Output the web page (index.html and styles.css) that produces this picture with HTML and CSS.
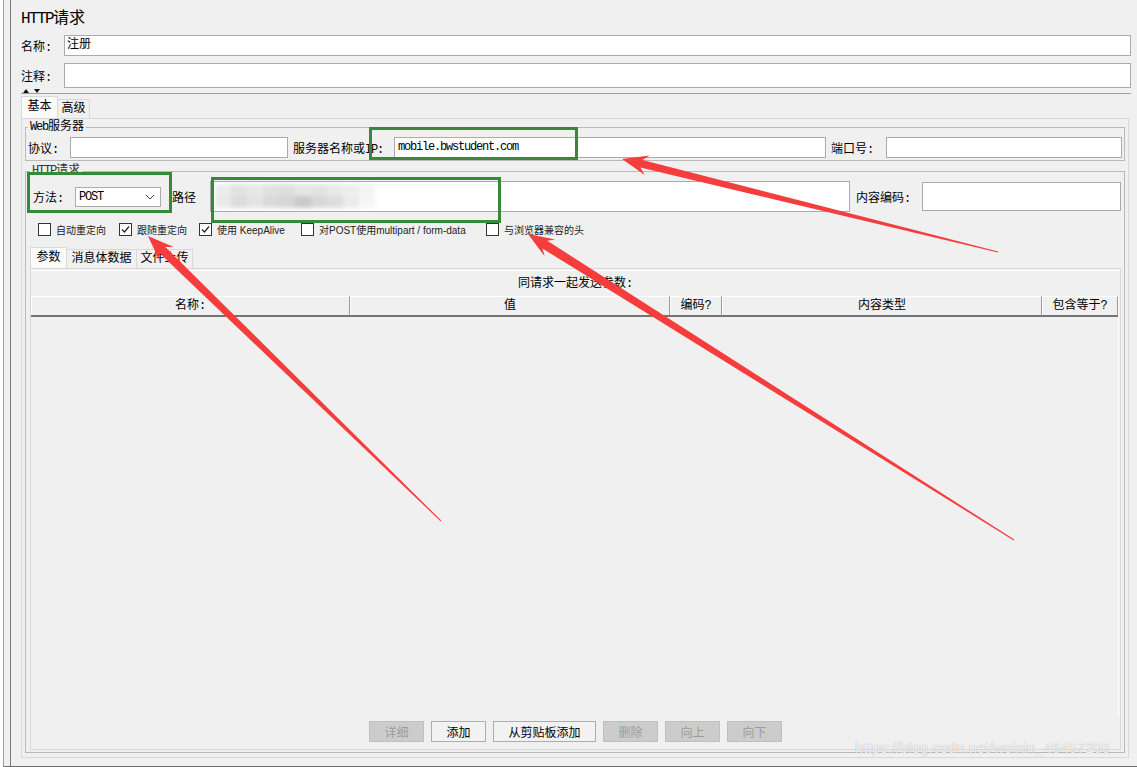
FILE: index.html
```html
<!DOCTYPE html>
<html lang="zh-CN">
<head>
<meta charset="UTF-8">
<meta name="viewport" content="width=device-width, initial-scale=1.0">
<title>HTTP请求</title>
<link rel="stylesheet" href="styles.css">
</head>
<body>
<div class="app">
<div class="main">
    <div class="title"><span class="lat big">HTTP</span>请求</div>
    <div class="row row-name">
        <span class="label">名称:</span>
        <div class="field">注册</div>
    </div>
    <div class="row row-note">
        <span class="label">注释:</span>
        <div class="field"></div>
    </div>
    <div class="splitter">
        <svg width="20" height="5" viewBox="0 0 20 5"><path d="M1 5 L4 1 L7 5 Z M12 1 L18 1 L15 5 Z" fill="#111"/></svg>
    </div>
    <div class="tabs">
        <span class="tab active t-basic">基本</span>
        <span class="tab t-adv">高级</span>
    </div>
    <div class="tab-panel">
        <fieldset class="group web">
            <legend><span class="lat">Web</span>服务器</legend>
            <div class="web-row">
                <span class="l-proto">协议:</span>
                <div class="field f-proto"></div>
                <span class="l-host">服务器名称或<span class="lat">IP</span>:</span>
                <div class="field f-host"><span class="lat">mobile.bwstudent.com</span></div>
                <span class="l-port">端口号:</span>
                <div class="field f-port"></div>
            </div>
        </fieldset>
        <fieldset class="group http">
            <legend><span class="lat">HTTP</span>请求</legend>
            <div class="req-row">
                <span class="l-method">方法:</span>
                <div class="select">
                    <span class="lat">POST</span>
                    <svg width="10" height="6" viewBox="0 0 10 6"><polyline points="1,1 5,5 9,1" fill="none" stroke="#444" stroke-width="1"/></svg>
                </div>
                <span class="l-path">路径</span>
                <div class="field f-path">
                    <div class="smudge">
                        <i style="background:#ececec"></i><i style="background:#e2e2e2"></i><i style="background:#e8e8e8"></i><i style="background:#e0e0e0"></i><i style="background:#dedede"></i><i style="background:#e6e6e6"></i><i style="background:#e3e3e3"></i><i style="background:#e9e9e9"></i><i style="background:#eeeeee"></i><i style="background:#f4f4f4"></i>
                        <i style="background:#e9e9e9"></i><i style="background:#dcdcdc"></i><i style="background:#e4e4e4"></i><i style="background:#dadada"></i><i style="background:#d6d6d6"></i><i style="background:#c9c9c9"></i><i style="background:#d8d8d8"></i><i style="background:#dddddd"></i><i style="background:#ebebeb"></i><i style="background:#f6f6f6"></i>
                    </div>
                </div>
                <span class="l-enc">内容编码:</span>
                <div class="field f-enc"></div>
            </div>
            <div class="checks">
                <label class="check c1"><span class="box"></span>自动重定向</label>
                <label class="check c2"><span class="box on"><svg width="11" height="11" viewBox="0 0 11 11"><polyline points="2,5.5 4.5,8 9,2.5" fill="none" stroke="#222" stroke-width="1.2"/></svg></span>跟随重定向</label>
                <label class="check c3"><span class="box on"><svg width="11" height="11" viewBox="0 0 11 11"><polyline points="2,5.5 4.5,8 9,2.5" fill="none" stroke="#222" stroke-width="1.2"/></svg></span>使用 KeepAlive</label>
                <label class="check c4"><span class="box"></span>对POST使用multipart / form-data</label>
                <label class="check c5"><span class="box"></span>与浏览器兼容的头</label>
            </div>
            <div class="subtabs">
                <span class="tab active s-args">参数</span>
                <span class="tab s-body">消息体数据</span>
                <span class="tab s-files">文件上传</span>
            </div>
            <div class="subpanel">
                <div class="caption">同请求一起发送参数:</div>
                <div class="table">
                    <div class="thead">
                        <span class="th c-name">名称:</span>
                        <span class="th c-value">值</span>
                        <span class="th c-enc">编码?</span>
                        <span class="th c-type">内容类型</span>
                        <span class="th c-eq">包含等于?</span>
                    </div>
                    <div class="tbody"></div>
                </div>
                <div class="buttons">
                    <button class="btn off">详细</button>
                    <button class="btn">添加</button>
                    <button class="btn wide">从剪贴板添加</button>
                    <button class="btn off">删除</button>
                    <button class="btn off">向上</button>
                    <button class="btn off">向下</button>
                </div>
            </div>
        </fieldset>
    </div>
</div>
</div>

<svg class="marks" width="1137" height="767" viewBox="0 0 1137 767">
    <rect x="370.5" y="128.5" width="206" height="30" fill="none" stroke="#348a38" stroke-width="3"/>
    <rect x="28.5" y="173.5" width="142" height="38" fill="none" stroke="#348a38" stroke-width="3"/>
    <rect x="212.5" y="178.5" width="287" height="43" fill="none" stroke="#348a38" stroke-width="3"/>
    <polygon points="622,159 649.6,155.5 642.4,160.0 998.1,251.5 997.9,252.5 640.4,167.6 644.8,175.0" fill="#f53d3d"/>
    <polygon points="148,236 173.6,247.0 165.3,246.9 441.3,520.6 440.7,521.4 159.4,253.0 159.7,261.3" fill="#f53d3d"/>
    <polygon points="528,234 555.3,239.4 547.3,240.8 1014.3,539.6 1013.7,540.4 542.5,248.5 544.7,256.3" fill="#f53d3d"/>
</svg>
<div class="watermark">https://blog.csdn.net/weixin_46457203</div>
</body>
</html>
```

FILE: styles.css
```css
/* JMeter style HTTP sampler panel */
html {
    background: #fff;
}
body {
    margin: 0;
    font-family: "Liberation Mono", "Noto Sans CJK SC", monospace;
    font-size: 12px;
    color: #000;
    position: relative;
}
.lat {
    font-family: "Liberation Mono", monospace;
    letter-spacing: -1.2px;
}
.lat.big {
    letter-spacing: -1.6px;
}
.app {
    margin-left: 3px;
    border-left: 1px solid #a0a0a0;
    border-bottom: 1px solid #6d6d6d;
    padding-left: 6px;
    background: #f0f0f0;
    height: 766px;
}
.main {
    border-left: 1px solid #7a7a7a;
    padding: 0 6px 0 10px;
    height: 766px;
    display: flex;
    flex-direction: column;
}
.title {
    margin-top: 9px;
    height: 20px;
    line-height: 20px;
    font-size: 16px;
}
.row {
    display: flex;
    align-items: center;
}
.row .label {
    width: 43px;
}
.row-name {
    margin-top: 6px;
    height: 21px;
}
.row-note {
    margin-top: 7px;
    height: 25px;
}
.field {
    box-sizing: border-box;
    height: 100%;
    background: #fff;
    border: 1px solid #ababab;
    padding-left: 2px;
    line-height: 19px;
}
.row .field {
    flex: 1;
}
.splitter {
    height: 5px;
    border-bottom: 1px solid #a0a0a0;
    overflow: hidden;
}
.splitter svg {
    display: block;
    margin-left: 1px;
}

/* tabs */
.tabs, .subtabs {
    display: flex;
    align-items: flex-end;
}
.tabs {
    margin-top: 2px;
    height: 22px;
}
.tab {
    box-sizing: border-box;
    height: 19px;
    border: 1px solid #d9d9d9;
    border-bottom: 0;
    text-align: center;
    line-height: 18px;
    background: #f0f0f0;
}
.tab.active {
    background: #fbfbfb;
}
.tabs .tab.active {
    height: 22px;
    line-height: 21px;
}
.t-basic { width: 37px; }
.t-adv { width: 32px; border-left: 0; }

.tab-panel {
    flex: 1;
    display: flex;
    flex-direction: column;
    border: 1px solid #d9d9d9;
    margin: 0 2px 8px 0;
    padding: 1px 3px 0 3px;
}

/* titled groups */
.group {
    margin: 0;
    border: 1px solid #b9b9b9;
    min-width: 0;
}
.group legend {
    padding: 0 2px;
    line-height: 14px;
    height: 14px;
}
.web {
    padding: 3px 2px 2px 2px;
}
.web-row {
    display: flex;
    align-items: center;
    height: 21px;
}
.l-proto { width: 42px; }
.f-proto { width: 218px; }
.l-host { width: 101px; margin-left: 5px; }
.f-host { width: 432px; }
.f-host .lat { padding-left: 1px; }
.l-port { width: 55px; margin-left: 5px; }
.f-port { flex: 1; }

.http {
    flex: 1;
    display: flex;
    flex-direction: column;
    margin: 3px 0 4px 0;
    padding: 3px 3px 2px 4px;
    color: #000;
}
.http legend {
    color: #333;
}
.req-row {
    display: flex;
    align-items: center;
    height: 31px;
    margin-left: 3px;
}
.l-method { width: 42px; }
.select {
    box-sizing: border-box;
    width: 86px;
    height: 20px;
    border: 1px solid #ababab;
    background: #fff;
    display: flex;
    align-items: center;
    justify-content: space-between;
    padding: 0 5px 0 3px;
}
.select svg { display: block; }
.l-path { width: 38px; margin-left: 11px; }
.f-path {
    flex: 1;
    height: 31px;
    overflow: hidden;
}
.smudge {
    display: grid;
    grid-template-columns: repeat(10, 16px);
    grid-template-rows: 12px 12px;
    margin: 2px 0 0 2px;
    filter: blur(2px);
}
.smudge i {
    display: block;
}
.l-enc { width: 66px; margin-left: 6px; }
.f-enc {
    width: 199px;
    height: 29px;
}

/* checkboxes */
.checks {
    display: flex;
    align-items: center;
    height: 14px;
    margin: 10px 0 0 8px;
    font-family: "Liberation Sans", "Noto Sans CJK SC", sans-serif;
    font-size: 10px;
    color: #222;
}
.check {
    display: flex;
    align-items: center;
}
.box {
    box-sizing: border-box;
    width: 13px;
    height: 13px;
    border: 1px solid #333;
    background: #fff;
    margin-right: 5px;
}
.box svg { display: block; }
.c1 { width: 81px; }
.c2 { width: 80px; }
.c3 { width: 102px; }
.c4 { width: 185px; }

/* inner tabs */
.subtabs {
    margin-top: 11px;
    height: 21px;
}
.subtabs .tab.active {
    height: 21px;
    line-height: 20px;
}
.s-args { width: 37px; }
.s-body { width: 70px; border-left: 0; }
.s-files { width: 56px; border-left: 0; }

.subpanel {
    flex: 1;
    display: flex;
    flex-direction: column;
    border: 1px solid #d9d9d9;
}
.caption {
    box-sizing: border-box;
    height: 26px;
    margin-top: 1px;
    border-top: 1px solid #fff;
    padding-top: 6px;
    line-height: 14px;
    text-align: center;
}
.table {
    flex: 1;
    display: flex;
    flex-direction: column;
    width: 1087px;
    border-right: 1px solid #fff;
}
.thead {
    display: flex;
    height: 21px;
    box-sizing: border-box;
    border-bottom: 2px solid #747474;
}
.th {
    box-sizing: border-box;
    border-top: 1px solid #fff;
    border-left: 1px solid #fff;
    border-right: 1px solid #9a9a9a;
    text-align: center;
    line-height: 18px;
}
.c-name { width: 319px; }
.c-value { width: 320px; }
.c-enc { width: 52px; }
.c-type { width: 320px; }
.c-eq { width: 76px; }
.tbody {
    flex: 1;
}
.buttons {
    display: flex;
    justify-content: center;
    gap: 7px;
    margin: 4px 0 7px 0;
}
.btn {
    box-sizing: border-box;
    width: 55px;
    height: 21px;
    padding: 0;
    border: 1px solid #adadad;
    background: #f2f2f2;
    font-family: "Noto Sans CJK SC", sans-serif;
    font-size: 12px;
    line-height: 19px;
    color: #000;
}
.btn.wide { width: 103px; }
.btn.off {
    background: #cccccc;
    border-color: #bfbfbf;
    color: #9c9c9c;
}

/* annotations laid over the screenshot */
.marks {
    position: absolute;
    top: 0;
    left: 0;
    pointer-events: none;
}
.watermark {
    position: absolute;
    left: 855px;
    top: 739px;
    font-family: "Liberation Sans", sans-serif;
    font-size: 15px;
    color: rgba(255, 255, 255, 0.85);
    text-shadow: 0 0 1px rgba(0, 0, 0, 0.35);
    white-space: nowrap;
}
```
